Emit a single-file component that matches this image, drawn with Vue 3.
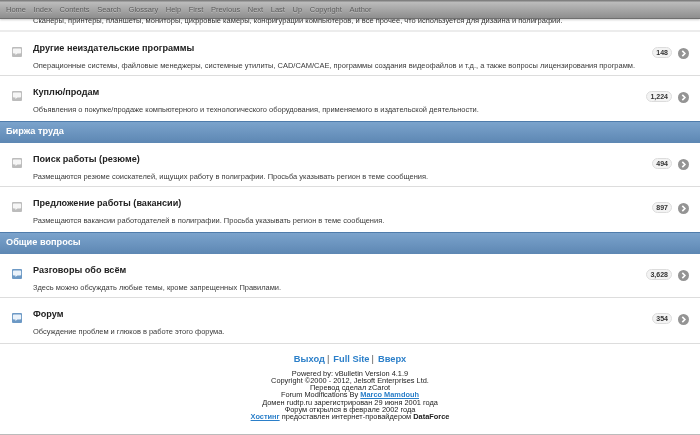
<script setup>
const navItems = ['Home','Index','Contents','Search','Glossary','Help','First','Previous','Next','Last','Up','Copyright','Author']
const sections = [
  { forums: [
    { title: 'Другие неиздательские программы', desc: 'Операционные системы, файловые менеджеры, системные утилиты, CAD/CAM/CAE, программы создания видеофайлов и т.д., а также вопросы лицензирования программ.', count: '148', tone: 'grey' },
    { title: 'Куплю/продам', desc: 'Объявления о покупке/продаже компьютерного и технологического оборудования, применяемого в издательской деятельности.', count: '1,224', tone: 'grey' },
  ]},
  { name: 'Биржа труда', forums: [
    { title: 'Поиск работы (резюме)', desc: 'Размещаются резюме соискателей, ищущих работу в полиграфии. Просьба указывать регион в теме сообщения.', count: '494', tone: 'grey' },
    { title: 'Предложение работы (вакансии)', desc: 'Размещаются вакансии работодателей в полиграфии. Просьба указывать регион в теме сообщения.', count: '897', tone: 'grey' },
  ]},
  { name: 'Общие вопросы', forums: [
    { title: 'Разговоры обо всём', desc: 'Здесь можно обсуждать любые темы, кроме запрещенных Правилами.', count: '3,628', tone: 'blue' },
    { title: 'Форум', desc: 'Обсуждение проблем и глюков в работе этого форума.', count: '354', tone: 'blue' },
  ]},
]
</script>

<template>
  <div class="page">
    <nav class="topbar">
      <span v-for="n in navItems" :key="n" class="navlink">{{ n }}</span>
    </nav>
    <main class="content">
      <div class="lead">Сканеры, принтеры, планшеты, мониторы, цифровые камеры, конфигурации компьютеров, и все прочее, что используется для дизайна и полиграфии.</div>
      <section v-for="(s, i) in sections" :key="i">
        <h2 v-if="s.name" class="cat">{{ s.name }}</h2>
        <article v-for="f in s.forums" :key="f.title" class="row">
          <svg class="bubble" width="10" height="10" viewBox="0 0 10 10">
            <rect x="0" y="0" width="10" height="10" rx="1" :fill="f.tone === 'blue' ? '#6d99c5' : '#bcbcbc'" />
            <path d="M1.8 1.6h6.4a.9.9 0 0 1 .9.9v3.1a.9.9 0 0 1-.9.9H5.4L3.4 8V6.5H1.8a.9.9 0 0 1-.9-.9V2.5a.9.9 0 0 1 .9-.9z" :fill="f.tone === 'blue' ? '#eaf2fa' : '#f6f6f6'" />
          </svg>
          <div class="text">
            <h3>{{ f.title }}</h3>
            <p>{{ f.desc }}</p>
          </div>
          <span class="count">{{ f.count }}</span>
          <svg class="go" width="11" height="11" viewBox="0 0 11 11">
            <circle cx="5.5" cy="5.5" r="5.5" fill="#949494" />
            <path d="M4.3 2.9 6.9 5.5 4.3 8.1" fill="none" stroke="#fff" stroke-width="1.6" />
          </svg>
        </article>
      </section>
      <footer class="foot">
        <div class="links"><a>Выход</a><span class="sep">|</span><a>Full Site</a><span class="sep">|</span><a>Вверх</a></div>
        <div class="credits">
          <div>Powered by: vBulletin Version 4.1.9</div>
          <div>Copyright ©2000 - 2012, Jelsoft Enterprises Ltd.</div>
          <div>Перевод сделал zCarot</div>
          <div>Forum Modifications By <a class="u">Marco Mamdouh</a></div>
          <div>Домен rudtp.ru зарегистрирован 29 июня 2001 года</div>
          <div>Форум открылся в феврале 2002 года</div>
          <div><a class="u">Хостинг</a> предоставлен интернет-провайдером <b>DataForce</b></div>
        </div>
      </footer>
    </main>
  </div>
</template>

<style>
html, body { margin: 0; background: #fff; overflow: hidden; }
</style>

<style scoped>
.page { position: relative; width: 700px; height: 435px; overflow: hidden; font-family: "Liberation Sans", Arial, sans-serif; color: #222; }
.topbar { position: absolute; top: 0; left: 0; right: 0; height: 18px; display: flex; align-items: center; gap: 7.6px; padding-left: 6px; background: linear-gradient(#7f7f7f, #7f7f7f 1px, #bcbcbc 2px, #8e8e8e); border-bottom: 1px solid #6f6f6f; box-shadow: 0 1px 2px rgba(0,0,0,.2); font-size: 7.5px; color: #5c5c5c; z-index: 2; }
.navlink { white-space: nowrap; text-shadow: 0 1px 0 rgba(255,255,255,.3); filter: blur(.3px); }
.content { padding-top: 16px; filter: blur(.3px); }
.lead { height: 13.5px; padding-left: 33px; font-size: 7.5px; line-height: 10px; border-bottom: 2px solid #ececec; white-space: nowrap; color: #333; }
.cat { margin: 0; height: 22px; box-sizing: border-box; padding-left: 6px; font-size: 9.2px; line-height: 19px; color: #fff; background: linear-gradient(#7ba3cc, #5d87b3); border-top: 1px solid #4f7cab; }
.row { display: flex; height: 44.5px; box-sizing: border-box; align-items: flex-start; border-bottom: 1px solid #ddd; }
section .row:last-child { border-bottom: 0; }
.bubble { margin: 15px 0 0 12px; flex: none; }
.text { margin-left: 11px; flex: 1; min-width: 0; }
h3 { margin: 10px 0 0; font-size: 9.1px; line-height: 12px; color: #222; }
.text p { margin: 7px 0 0; font-size: 7.48px; line-height: 10px; color: #3a3a3a; white-space: nowrap; }
.count { margin: 15px 0 0; padding: 0 3px; height: 9px; font-size: 7px; font-weight: bold; line-height: 9px; color: #333; background: #f3f3f3; border: 1px solid #dcdcdc; border-radius: 6px; }
.go { margin: 16px 11px 0 6px; flex: none; }
.foot { border-top: 1px solid #ddd; border-bottom: 2px solid #bbb; text-align: center; padding-top: 8px; height: 82px; }
.links { font-size: 9.3px; line-height: 14px; font-weight: bold; color: #555; }
.links a { color: #2b7fc9; }
.sep { margin: 0 4px 0 2px; font-weight: normal; }
.credits { margin-top: 4px; font-size: 7.4px; line-height: 7.3px; color: #222; }
.u { color: #2b7fc9; font-weight: bold; text-decoration: underline; }
</style>
